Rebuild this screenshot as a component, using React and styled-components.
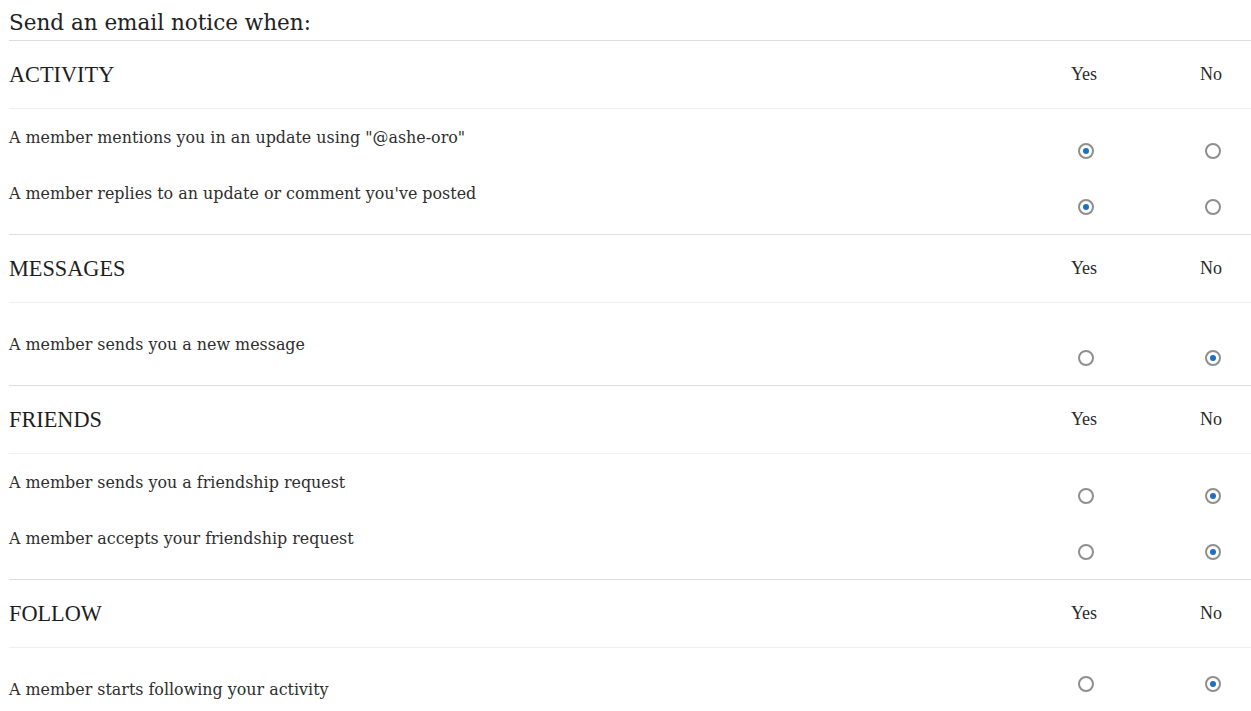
import React from 'react'
import styled, { createGlobalStyle } from 'styled-components'

const GlobalStyle = createGlobalStyle`
  body {
    margin: 0;
    background: #ffffff;
  }
`

const sections = [
  {
    title: 'ACTIVITY',
    padTop: 0,
    rows: [
      { name: 'mention', label: 'A member mentions you in an update using "@ashe-oro"', yes: true },
      { name: 'reply', label: "A member replies to an update or comment you've posted", yes: true },
    ],
  },
  {
    title: 'MESSAGES',
    padTop: 13,
    rows: [{ name: 'message', label: 'A member sends you a new message', yes: false }],
  },
  {
    title: 'FRIENDS',
    padTop: 0,
    rows: [
      { name: 'friend-request', label: 'A member sends you a friendship request', yes: false },
      { name: 'friend-accept', label: 'A member accepts your friendship request', yes: false },
    ],
  },
  {
    title: 'FOLLOW',
    padTop: 13,
    rows: [{ name: 'follow', label: 'A member starts following your activity', yes: false, radioTop: 15 }],
  },
]

export default function App() {
  return (
    <Page>
      <GlobalStyle />
      <Title>Send an email notice when:</Title>
      {sections.map((section) => (
        <Section key={section.title}>
          <Header>
            <HeaderLabel>{section.title}</HeaderLabel>
            <OptionLabel>Yes</OptionLabel>
            <OptionLabel>No</OptionLabel>
          </Header>
          <Body $padTop={section.padTop}>
            {section.rows.map((row) => (
              <Row key={row.name}>
                <RowText>{row.label}</RowText>
                <RadioCell $top={row.radioTop ?? 34}>
                  <Radio type="radio" name={row.name} defaultChecked={row.yes} />
                </RadioCell>
                <RadioCell $top={row.radioTop ?? 34}>
                  <Radio type="radio" name={row.name} defaultChecked={!row.yes} />
                </RadioCell>
              </Row>
            ))}
          </Body>
        </Section>
      ))}
    </Page>
  )
}

const Page = styled.div`
  padding-left: 9px;
  font-family: "DejaVu Serif", "Liberation Serif", serif;
`

const Title = styled.h2`
  margin: 0;
  height: 40px;
  padding-top: 8px;
  box-sizing: border-box;
  font-size: 21.5px;
  font-weight: 400;
  line-height: 30px;
  color: #222;
`

const Section = styled.div`
  border-top: 1px solid #dedede;
`

const Header = styled.div`
  display: grid;
  grid-template-columns: 1fr 127px 127px;
  align-items: center;
  height: 67px;
  border-bottom: 1px solid #efefef;
`

const HeaderLabel = styled.div`
  font-family: "Liberation Serif", serif;
  font-size: 22.3px;
  color: #1e1e1e;
`

const OptionLabel = styled.div`
  justify-self: end;
  width: 80px;
  text-align: center;
  font-family: "Liberation Serif", serif;
  font-size: 18px;
  color: #2a2a2a;
  padding-bottom: 1px;
`

const Body = styled.div`
  padding-top: ${(p) => p.$padTop}px;
  padding-bottom: 13px;
`

const Row = styled.div`
  display: grid;
  grid-template-columns: 1fr 127px 127px;
  height: 56px;
`

const RowText = styled.div`
  align-self: center;
  font-size: 15.9px;
  color: #2e2e2e;
`

const RadioCell = styled.div`
  justify-self: end;
  width: 80px;
  display: flex;
  justify-content: center;
  padding-top: ${(p) => p.$top}px;
  padding-left: 3px;
  box-sizing: border-box;
`

const Radio = styled.input`
  appearance: none;
  margin: 0;
  width: 16px;
  height: 16px;
  border: 2px solid #8f8f8f;
  border-radius: 50%;
  box-sizing: border-box;
  background: #fff;
  display: grid;
  place-items: center;

  &:checked::after {
    content: "";
    width: 6px;
    height: 6px;
    border-radius: 50%;
    background: #1d6fc2;
  }
`
